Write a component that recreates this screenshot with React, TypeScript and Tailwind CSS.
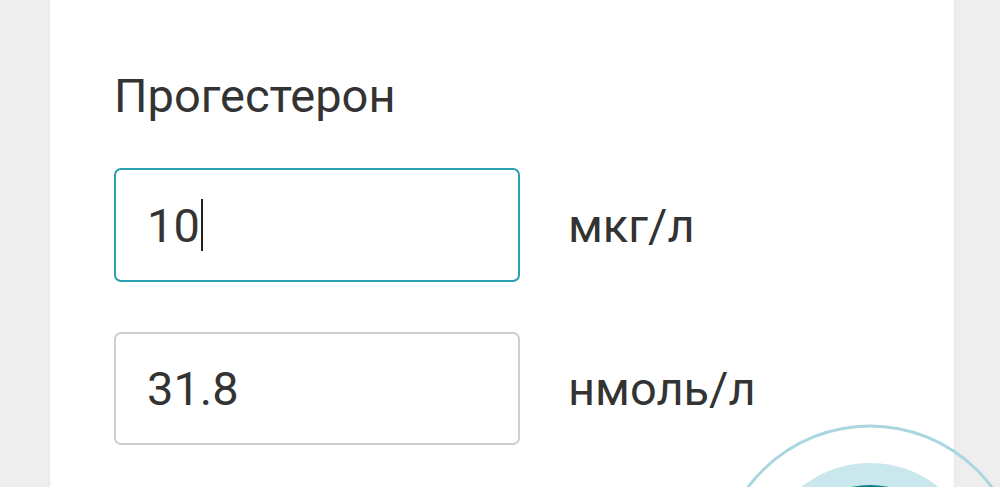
import React from "react";

export default function App() {
  const font = { fontFamily: "Roboto, 'Noto Sans', sans-serif" };
  return (
    <div className="relative h-[487px] w-[1000px] overflow-hidden bg-[#eeeeee]" style={font}>
      <div className="ml-[50px] h-full w-[904px] bg-white shadow-[0_0_2px_rgba(0,0,0,0.08)] pl-[64px] pt-[69px]">
        <div className="text-[47px] leading-[54px] text-[#333333]">Прогестерон</div>
        <div className="mt-[45px] flex flex-col gap-[50px]">
          <div className="flex items-center gap-[48px]">
            <div className="flex h-[114px] w-[406px] items-center rounded-[7px] border-2 border-[#2b9fb2] pl-[31px] text-[47px] text-[#333333]">
              <span className="leading-none">10</span>
              <span className="ml-[1px] inline-block h-[52px] w-[2px] bg-[#222222]" />
            </div>
            <div className="text-[47px] leading-none text-[#333333]">мкг/л</div>
          </div>
          <div className="flex items-center gap-[48px]">
            <div className="flex h-[113px] w-[406px] items-center rounded-[7px] border-2 border-[#cfcfcf] pl-[31px] text-[47px] text-[#333333]">
              <span className="leading-none">31.8</span>
            </div>
            <div className="text-[47px] leading-none text-[#333333]">нмоль/л</div>
          </div>
        </div>
      </div>
      <svg className="absolute left-[700px] top-[400px]" width="300" height="87" viewBox="700 400 300 87">
        <circle cx="870" cy="578" r="152" fill="none" stroke="#a9d6df" strokeWidth="3" />
        <circle cx="870" cy="573" r="110" fill="#c9e7ed" />
        <circle cx="870" cy="575" r="90" fill="#0f7d8e" />
      </svg>
    </div>
  );
}
